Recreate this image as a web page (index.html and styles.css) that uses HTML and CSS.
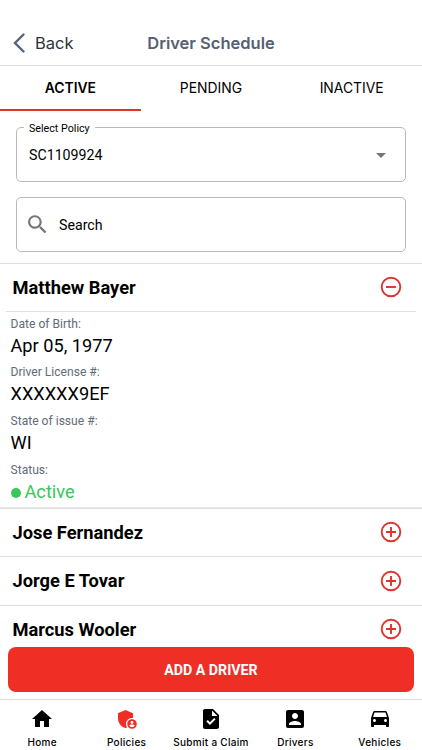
FILE: index.html
```html
<!DOCTYPE html>
<html lang="en">
<head>
  <meta charset="UTF-8" />
  <meta name="viewport" content="width=device-width, initial-scale=1.0" />
  <title>Driver Schedule</title>
  <link rel="stylesheet" href="styles.css">
</head>
<body>
  <header class="header">
    <a class="back">
      <svg width="14" height="22" viewBox="0 0 14 22"><path d="M11.5 2.5 3 11l8.500 8.500" /></svg>
      <span>Back</span>
    </a>
    <h1>Driver Schedule</h1>
  </header>

  <nav class="tabs">
    <a class="tab active">ACTIVE</a>
    <a class="tab">PENDING</a>
    <a class="tab">INACTIVE</a>
  </nav>

  <main class="content">
    <div class="filters">
      <div class="field">
        <span class="field-label">Select Policy</span>
        <span class="field-value">SC1109924</span>
        <svg class="arrow" width="24" height="24" viewBox="0 0 24 24"><path d="M7 10l5 5 5-5z" /></svg>
      </div>
      <div class="field search">
        <svg width="25" height="25" viewBox="0 0 24 24"><path d="M15.500 14h-.79l-.28-.27C15.410 12.590 16 11.110 16 9.500 16 5.910 13.090 3 9.500 3S3 5.910 3 9.500 5.910 16 9.500 16c1.610 0 3.090-.59 4.230-1.570l.27.28v.79l5 4.990L20.490 19l-4.990-5zm-6 0C7.010 14 5 11.990 5 9.500S7.010 5 9.500 5 14 7.010 14 9.500 11.990 14 9.500 14z" /></svg>
        <span class="field-value">Search</span>
      </div>
    </div>

    <section class="driver open">
      <div class="driver-name">
        <h2>Matthew Bayer</h2>
        <svg class="toggle" width="24" height="24" viewBox="0 0 24 24"><circle cx="12" cy="12" r="9.300" /><path d="M7 12h10" /></svg>
      </div>
      <dl class="details">
        <dt>Date of Birth:</dt>
        <dd>Apr 05, 1977</dd>
        <dt>Driver License #:</dt>
        <dd>XXXXXX9EF</dd>
        <dt>State of issue #:</dt>
        <dd>WI</dd>
        <dt>Status:</dt>
        <dd class="status"><span class="dot"></span>Active</dd>
      </dl>
    </section>
    <section class="driver">
      <div class="driver-name">
        <h2>Jose Fernandez</h2>
        <svg class="toggle" width="24" height="24" viewBox="0 0 24 24"><circle cx="12" cy="12" r="9.300" /><path d="M7 12h10M12 7v10" /></svg>
      </div>
    </section>
    <section class="driver">
      <div class="driver-name">
        <h2>Jorge E Tovar</h2>
        <svg class="toggle" width="24" height="24" viewBox="0 0 24 24"><circle cx="12" cy="12" r="9.300" /><path d="M7 12h10M12 7v10" /></svg>
      </div>
    </section>
    <section class="driver">
      <div class="driver-name">
        <h2>Marcus Wooler</h2>
        <svg class="toggle" width="24" height="24" viewBox="0 0 24 24"><circle cx="12" cy="12" r="9.300" /><path d="M7 12h10M12 7v10" /></svg>
      </div>
    </section>
  </main>

  <div class="actions">
    <button type="button">ADD A DRIVER</button>
  </div>

  <nav class="bottom-nav">
    <a class="nav-item">
      <svg width="24" height="24" viewBox="0 0 24 24"><path d="M10 20v-6h4v6h5v-8h3L12 3 2 12h3v8z" /></svg>
      <span>Home</span>
    </a>
    <a class="nav-item selected">
      <svg width="24" height="24" viewBox="0 0 24 24"><path d="M17 11c.34 0 .67.04 1 .09V6.270L10.500 3 3 6.270v4.910c0 4.540 3.200 8.790 7.500 9.820.55-.13 1.080-.32 1.600-.55-.69-.98-1.100-2.170-1.100-3.450 0-3.310 2.690-6 6-6z" /><path d="M17 12.200a4.800 4.800 0 1 0 0 9.600 4.800 4.800 0 0 0 0-9.600zm0 1.900a1.400 1.400 0 1 1 0 2.800 1.400 1.400 0 0 1 0-2.800zm0 6.200c-1.150 0-2.150-.57-2.770-1.440.06-.89 1.860-1.330 2.770-1.330s2.710.44 2.770 1.330c-.62.87-1.620 1.440-2.770 1.440z" fill-rule="evenodd" /></svg>
      <span>Policies</span>
    </a>
    <a class="nav-item">
      <svg width="24" height="24" viewBox="0 0 24 24"><path d="M14 2H6c-1.100 0-1.990.9-1.990 2L4 20c0 1.100.89 2 1.990 2H18c1.100 0 2-.9 2-2V8l-6-6zm-3.060 16L7.400 14.460l1.410-1.410 2.120 2.120 4.240-4.240 1.410 1.410L10.940 18zM13 9V3.500L18.500 9H13z" /></svg>
      <span>Submit a Claim</span>
    </a>
    <a class="nav-item">
      <svg width="24" height="24" viewBox="0 0 24 24"><path d="M3 5v14c0 1.100.89 2 2 2h14c1.100 0 2-.9 2-2V5c0-1.100-.9-2-2-2H5c-1.110 0-2 .9-2 2zm12 4c0 1.660-1.340 3-3 3s-3-1.340-3-3 1.340-3 3-3 3 1.340 3 3zm-9 8c0-2 4-3.100 6-3.100s6 1.100 6 3.100v1H6v-1z" /></svg>
      <span>Drivers</span>
    </a>
    <a class="nav-item">
      <svg width="24" height="24" viewBox="0 0 24 24"><path d="M18.920 5.010C18.720 4.420 18.160 4 17.500 4h-11c-.66 0-1.210.42-1.420 1.010L3 11v8c0 .55.45 1 1 1h1c.55 0 1-.45 1-1v-1h12v1c0 .55.45 1 1 1h1c.55 0 1-.45 1-1v-8l-2.080-5.990zM6.500 15c-.83 0-1.500-.67-1.500-1.500S5.670 12 6.500 12s1.500.67 1.500 1.500S7.330 15 6.500 15zm11 0c-.83 0-1.500-.67-1.500-1.500s.67-1.500 1.500-1.500 1.500.67 1.500 1.500-.67 1.500-1.500 1.500zM5 10l1.500-4.500h11L19 10H5z" /></svg>
      <span>Vehicles</span>
    </a>
  </nav>
</body>
</html>
```
FILE: styles.css
```css
* {
  box-sizing: border-box;
}
body {
  margin: 0;
  height: 750px;
  display: flex;
  flex-direction: column;
  overflow: hidden;
  font-family: Roboto, sans-serif;
  background: #fff;
  color: #000;
}
h1, h2, dl, dd {
  margin: 0;
}
svg {
  display: block;
  flex: none;
}
.header {
  height: 66px;
  padding: 21px 12px 0;
  display: grid;
  grid-template-columns: 1fr auto 1fr;
  align-items: center;
  border-bottom: 1px solid #e0e0e2;
  font-family: Inter, sans-serif;
}
.back {
  display: flex;
  align-items: center;
  gap: 9px;
  font-size: 16.500px;
  color: #303236;
}
.back svg {
  fill: none;
  stroke: #56637a;
  stroke-width: 2.4;
  stroke-linecap: round;
}
.header h1 {
  font-size: 16.500px;
  font-weight: 600;
  color: #566173;
}
.tabs {
  height: 45px;
  display: flex;
}
.tab {
  flex: 1;
  display: flex;
  align-items: center;
  justify-content: center;
  border-bottom: 2px solid transparent;
  font-family: Inter, sans-serif;
  font-size: 13.900px;
}
.tab.active {
  border-color: #e0342b;
  font-weight: 600;
}
.content {
  height: 529px;
  overflow: hidden;
}
.filters {
  padding: 16px 16px 11px;
  display: grid;
  gap: 15px;
}
.field {
  position: relative;
  height: 55px;
  padding: 0 12px;
  display: flex;
  align-items: center;
  border: 1px solid #b9b9b9;
  border-radius: 5px;
}
.field-label {
  position: absolute;
  top: -6px;
  left: 7px;
  padding: 0 5px;
  background: #fff;
  font-size: 10.700px;
  line-height: 14px;
}
.field-value {
  font-size: 14.200px;
}
.field svg {
  fill: #757575;
}
.arrow {
  margin-left: auto;
}
.search {
  padding-left: 8px;
  gap: 9px;
}
.driver {
  border-top: 1px solid #dedee1;
}
.driver-name {
  height: 47.500px;
  padding: 0 19px 0 12.500px;
  display: flex;
  align-items: center;
  justify-content: space-between;
}
.open {
  border-bottom: 1px solid #e8e8ec;
}
.open .driver-name {
  height: 46.500px;
}
.driver h2 {
  font-size: 18.300px;
  font-weight: 700;
}
.toggle {
  fill: none;
  stroke: #dc3430;
  stroke-width: 1.900;
}
.details {
  margin: 0 6px;
  padding: 2px 4.500px 0;
  height: 196px;
  border-top: 1px solid #dfdfe2;
}
.details dt {
  font-size: 12.100px;
  line-height: 21px;
  color: #626b79;
}
.details dd {
  font-size: 18.200px;
  line-height: 22px;
  margin-bottom: 5.700px;
}
.details .status {
  display: flex;
  align-items: center;
  gap: 4px;
  color: #37c75d;
}
.dot {
  width: 10px;
  height: 10px;
  margin-top: 2px;
  border-radius: 50%;
  background: #37c75d;
}
.actions {
  height: 59px;
  padding: 7px 8px;
}
.actions button {
  width: 100%;
  height: 45px;
  border: 0;
  border-radius: 8px;
  background: #ef2e26;
  color: #fff;
  font-family: Roboto, sans-serif;
  font-size: 14.200px;
  font-weight: 700;
}
.bottom-nav {
  height: 51px;
  display: grid;
  grid-template-columns: repeat(5, 1fr);
  border-top: 1px solid #dcdcdf;
}
.nav-item {
  padding-top: 7px;
  display: flex;
  flex-direction: column;
  align-items: center;
  white-space: nowrap;
  font-family: Inter, sans-serif;
  font-size: 10px;
  font-weight: 500;
}
.nav-item span {
  margin-top: 4px;
  line-height: 14px;
  letter-spacing: 0.3px;
}
.selected svg {
  fill: #ef2e26;
}
```
